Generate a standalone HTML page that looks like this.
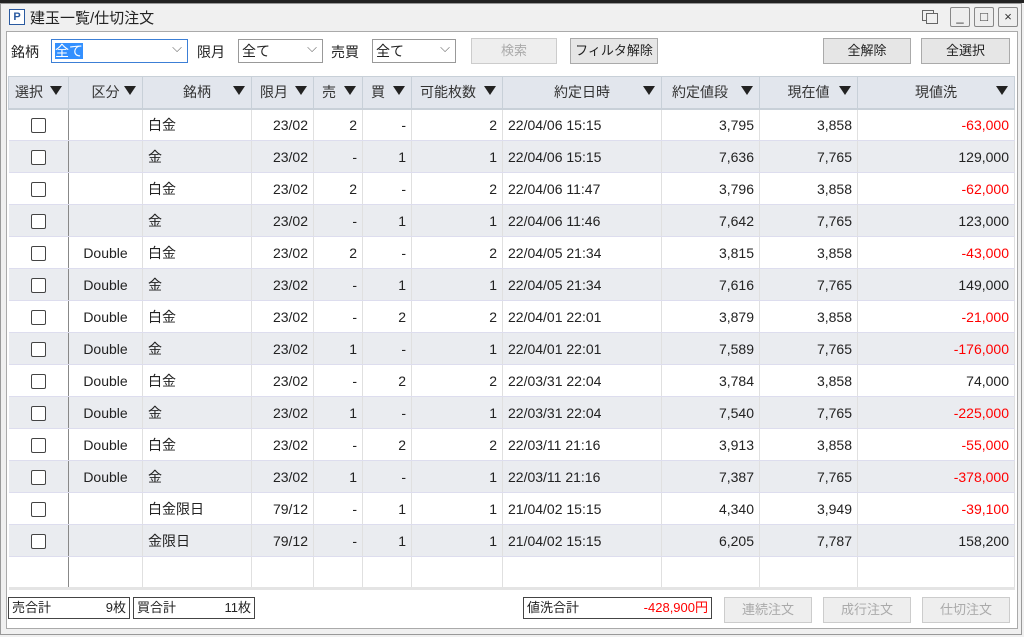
<!DOCTYPE html><html><head><meta charset="utf-8"><style>
*{box-sizing:border-box;margin:0;padding:0}
body{width:1024px;height:637px;overflow:hidden;background:#f0f0f0;font-family:"Liberation Sans","Noto Sans CJK JP",sans-serif;font-size:14px;color:#222;position:relative}
.abs{position:absolute}
.top{left:0;top:0;width:1024px;height:3px;background:#222}
.win{left:0;top:3px;width:1022px;height:632px;border:1px solid #999;background:#f0f0f0}
.title{left:30px;top:7px;font-size:15px}
.pico{left:9px;top:9px;width:16px;height:16px;border:1px solid #2a5aa0;background:#fff;font-size:11px;font-weight:bold;color:#2a5aa0;text-align:center;line-height:14px}
.wb{top:7px;width:20px;height:20px;border:1px solid #888;border-radius:2px;background:#eee;font-size:13px;text-align:center;line-height:18px;color:#333}
.content{left:6px;top:31px;width:1012px;height:598px;background:#fff;border:1px solid #aaa}
.sel{height:24px;border:1px solid #999;background:#fff;font-size:14px;padding-left:3px;line-height:22px}
.sel:after{content:"⌵";position:absolute;right:5px;top:-3px;color:#666;font-size:13px}
.btn{height:26px;border:1px solid #aaa;background:#e6e6e6;text-align:center;line-height:24px;font-size:13px}
.dis{color:#aaa;background:#eee;border-color:#ccc}
table{position:absolute;left:8px;top:76px;border-collapse:collapse;table-layout:fixed;font-size:14px}
th{background:#e2e6ed;height:32px;font-weight:normal;border:1px solid #c8d0d8;border-bottom:2px solid #c8d0d8;text-align:center;position:relative;color:#333}
th i{position:absolute;right:6px;top:9px;width:0;height:0;border-left:6px solid transparent;border-right:6px solid transparent;border-top:9px solid #222}
td{height:32px;border-right:1px solid #e0e0e0;border-bottom:1px solid #dde;padding:0 5px;white-space:nowrap}
tr:nth-child(odd) td{background:#eaecf0}
td.c0{border-right:1px solid #888;text-align:center}
.cb{display:inline-block;width:15px;height:15px;border:1px solid #444;border-radius:2px;background:#fff;vertical-align:middle}
.r{text-align:right}.c{text-align:center}.red{color:#f00}
.foot{height:22px;border:1px solid #444;background:#fff;font-size:13px;line-height:20px;padding:0 3px}
</style></head><body>
<div class="abs top"></div>
<div class="abs win"></div>
<div class="abs pico">P</div>
<div class="abs title">建玉一覧/仕切注文</div>
<div class="abs" style="left:922px;top:10px;width:12px;height:11px;border:1px solid #666"></div>
<div class="abs" style="left:926px;top:13px;width:12px;height:11px;border:1px solid #666;background:#f0f0f0"></div>
<div class="abs wb" style="left:950px">_</div>
<div class="abs wb" style="left:974px">□</div>
<div class="abs wb" style="left:998px">×</div>
<div class="abs content"></div>
<div class="abs" style="left:11px;top:42px">銘柄</div>
<div class="abs sel" style="left:51px;top:39px;width:137px;border-color:#3c7fd6"><span style="background:#3390ff;color:#fff">全て</span></div>
<div class="abs" style="left:197px;top:42px">限月</div>
<div class="abs sel" style="left:238px;top:39px;width:85px">全て</div>
<div class="abs" style="left:331px;top:42px">売買</div>
<div class="abs sel" style="left:372px;top:39px;width:84px">全て</div>
<div class="abs btn dis" style="left:471px;top:38px;width:86px">検索</div>
<div class="abs btn" style="left:570px;top:38px;width:88px">フィルタ解除</div>
<div class="abs btn" style="left:823px;top:38px;width:88px">全解除</div>
<div class="abs btn" style="left:921px;top:38px;width:89px">全選択</div>
<table>
<colgroup><col style="width:60px"><col style="width:74px"><col style="width:109px"><col style="width:62px"><col style="width:49px"><col style="width:49px"><col style="width:91px"><col style="width:159px"><col style="width:98px"><col style="width:98px"><col style="width:157px"></colgroup>
<tr><th style="text-align:left;padding-left:6px">選択<i></i></th><th>区分<i></i></th><th>銘柄<i></i></th><th style="text-align:left;padding-left:8px">限月<i></i></th><th style="text-align:left;padding-left:8px">売<i></i></th><th style="text-align:left;padding-left:8px">買<i></i></th><th style="text-align:left;padding-left:8px">可能枚数<i></i></th><th>約定日時<i></i></th><th style="text-align:left;padding-left:10px">約定値段<i></i></th><th>現在値<i></i></th><th>現値洗<i></i></th></tr>
<tr><td class="c0"><span class="cb"></span></td><td class="c"></td><td>白金</td><td class="r">23/02</td><td class="r">2</td><td class="r">-</td><td class="r">2</td><td>22/04/06 15:15</td><td class="r">3,795</td><td class="r">3,858</td><td class="r red">-63,000</td></tr>
<tr><td class="c0"><span class="cb"></span></td><td class="c"></td><td>金</td><td class="r">23/02</td><td class="r">-</td><td class="r">1</td><td class="r">1</td><td>22/04/06 15:15</td><td class="r">7,636</td><td class="r">7,765</td><td class="r">129,000</td></tr>
<tr><td class="c0"><span class="cb"></span></td><td class="c"></td><td>白金</td><td class="r">23/02</td><td class="r">2</td><td class="r">-</td><td class="r">2</td><td>22/04/06 11:47</td><td class="r">3,796</td><td class="r">3,858</td><td class="r red">-62,000</td></tr>
<tr><td class="c0"><span class="cb"></span></td><td class="c"></td><td>金</td><td class="r">23/02</td><td class="r">-</td><td class="r">1</td><td class="r">1</td><td>22/04/06 11:46</td><td class="r">7,642</td><td class="r">7,765</td><td class="r">123,000</td></tr>
<tr><td class="c0"><span class="cb"></span></td><td class="c">Double</td><td>白金</td><td class="r">23/02</td><td class="r">2</td><td class="r">-</td><td class="r">2</td><td>22/04/05 21:34</td><td class="r">3,815</td><td class="r">3,858</td><td class="r red">-43,000</td></tr>
<tr><td class="c0"><span class="cb"></span></td><td class="c">Double</td><td>金</td><td class="r">23/02</td><td class="r">-</td><td class="r">1</td><td class="r">1</td><td>22/04/05 21:34</td><td class="r">7,616</td><td class="r">7,765</td><td class="r">149,000</td></tr>
<tr><td class="c0"><span class="cb"></span></td><td class="c">Double</td><td>白金</td><td class="r">23/02</td><td class="r">-</td><td class="r">2</td><td class="r">2</td><td>22/04/01 22:01</td><td class="r">3,879</td><td class="r">3,858</td><td class="r red">-21,000</td></tr>
<tr><td class="c0"><span class="cb"></span></td><td class="c">Double</td><td>金</td><td class="r">23/02</td><td class="r">1</td><td class="r">-</td><td class="r">1</td><td>22/04/01 22:01</td><td class="r">7,589</td><td class="r">7,765</td><td class="r red">-176,000</td></tr>
<tr><td class="c0"><span class="cb"></span></td><td class="c">Double</td><td>白金</td><td class="r">23/02</td><td class="r">-</td><td class="r">2</td><td class="r">2</td><td>22/03/31 22:04</td><td class="r">3,784</td><td class="r">3,858</td><td class="r">74,000</td></tr>
<tr><td class="c0"><span class="cb"></span></td><td class="c">Double</td><td>金</td><td class="r">23/02</td><td class="r">1</td><td class="r">-</td><td class="r">1</td><td>22/03/31 22:04</td><td class="r">7,540</td><td class="r">7,765</td><td class="r red">-225,000</td></tr>
<tr><td class="c0"><span class="cb"></span></td><td class="c">Double</td><td>白金</td><td class="r">23/02</td><td class="r">-</td><td class="r">2</td><td class="r">2</td><td>22/03/11 21:16</td><td class="r">3,913</td><td class="r">3,858</td><td class="r red">-55,000</td></tr>
<tr><td class="c0"><span class="cb"></span></td><td class="c">Double</td><td>金</td><td class="r">23/02</td><td class="r">1</td><td class="r">-</td><td class="r">1</td><td>22/03/11 21:16</td><td class="r">7,387</td><td class="r">7,765</td><td class="r red">-378,000</td></tr>
<tr><td class="c0"><span class="cb"></span></td><td class="c"></td><td>白金限日</td><td class="r">79/12</td><td class="r">-</td><td class="r">1</td><td class="r">1</td><td>21/04/02 15:15</td><td class="r">4,340</td><td class="r">3,949</td><td class="r red">-39,100</td></tr>
<tr><td class="c0"><span class="cb"></span></td><td class="c"></td><td>金限日</td><td class="r">79/12</td><td class="r">-</td><td class="r">1</td><td class="r">1</td><td>21/04/02 15:15</td><td class="r">6,205</td><td class="r">7,787</td><td class="r">158,200</td></tr>
<tr><td class="c0" style="height:30px;border-bottom:3px solid #e4e4e4"></td><td style="border-bottom:3px solid #e4e4e4"></td><td style="border-bottom:3px solid #e4e4e4"></td><td style="border-bottom:3px solid #e4e4e4"></td><td style="border-bottom:3px solid #e4e4e4"></td><td style="border-bottom:3px solid #e4e4e4"></td><td style="border-bottom:3px solid #e4e4e4"></td><td style="border-bottom:3px solid #e4e4e4"></td><td style="border-bottom:3px solid #e4e4e4"></td><td style="border-bottom:3px solid #e4e4e4"></td><td style="border-bottom:3px solid #e4e4e4"></td></tr>
</table>
<div class="abs foot" style="left:8px;top:597px;width:122px">売合計<span style="float:right">9枚</span></div>
<div class="abs foot" style="left:133px;top:597px;width:122px">買合計<span style="float:right">11枚</span></div>
<div class="abs foot" style="left:523px;top:597px;width:189px">値洗合計<span style="float:right;color:#f00">-428,900円</span></div>
<div class="abs btn dis" style="left:724px;top:597px;width:88px">連続注文</div>
<div class="abs btn dis" style="left:823px;top:597px;width:88px">成行注文</div>
<div class="abs btn dis" style="left:922px;top:597px;width:88px">仕切注文</div>
</body></html>
